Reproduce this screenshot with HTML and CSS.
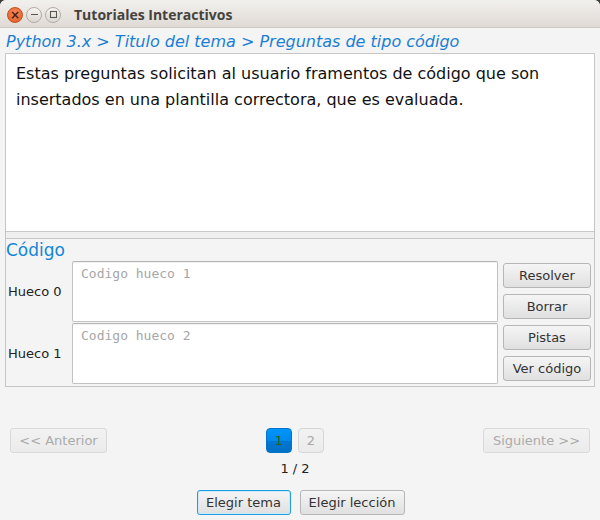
FILE: index.html
```html
<!DOCTYPE html>
<html>
<head>
<meta charset="utf-8">
<link rel="stylesheet" href="styles.css">
</head>
<body>
<div class="window">
  <div class="titlebar">
    <div class="wbtn close"><span>×</span></div>
    <div class="wbtn min"><svg width="9" height="9" viewBox="0 0 9 9"><path d="M1 4.5h7" stroke="#5a5650" stroke-width="1.2"/></svg></div>
    <div class="wbtn max"><svg width="9" height="9" viewBox="0 0 9 9"><rect x="1.5" y="1.5" width="6" height="6" fill="none" stroke="#5a5650" stroke-width="1.1"/></svg></div>
    <div class="wtitle">Tutoriales Interactivos</div>
  </div>
  <div class="content">
    <div class="crumb">Python 3.x &gt; Titulo del tema &gt; Preguntas de tipo código</div>
    <div class="split">
      <div class="desc">Estas preguntas solicitan al usuario framentos de código que son insertados en una plantilla correctora, que es evaluada.</div>
      <div class="divider"></div>
      <div class="code">
        <div class="code-title">Código</div>
        <div class="code-body">
          <div class="holes">
            <div class="hole">
              <div class="hole-label">Hueco 0</div>
              <div class="field">Codigo hueco 1</div>
            </div>
            <div class="hole">
              <div class="hole-label">Hueco 1</div>
              <div class="field">Codigo hueco 2</div>
            </div>
          </div>
          <div class="actions">
            <button class="btn side">Resolver</button>
            <button class="btn side">Borrar</button>
            <button class="btn side">Pistas</button>
            <button class="btn side">Ver código</button>
          </div>
        </div>
      </div>
    </div>
    <div class="pager">
      <button class="btn disabled nav">&lt;&lt; Anterior</button>
      <div class="pages">
        <button class="page current">1</button>
        <button class="page">2</button>
      </div>
      <button class="btn disabled nav">Siguiente &gt;&gt;</button>
    </div>
    <div class="count">1 / 2</div>
    <div class="bottom">
      <button class="btn focused">Elegir tema</button>
      <button class="btn">Elegir lección</button>
    </div>
  </div>
</div>
</body>
</html>
```
FILE: styles.css
```css
* { box-sizing: border-box; }
html, body { margin: 0; padding: 0; }
body {
  width: 600px;
  height: 520px;
  background: #3c3b37;
  overflow: hidden;
  font-family: "DejaVu Sans", sans-serif;
}
.window {
  width: 600px;
  height: 520px;
  background: #f4f4f4;
  border-radius: 6px 6px 0 0;
  overflow: hidden;
}
.titlebar {
  height: 28px;
  display: flex;
  align-items: center;
  padding-left: 7px;
  background: linear-gradient(#f2f0ed, #dfdad5);
  border-bottom: 1px solid #cfc9c3;
}
.wbtn {
  width: 16px;
  height: 16px;
  border-radius: 50%;
  display: flex;
  align-items: center;
  justify-content: center;
  margin-right: 3px;
  margin-top: 2px;
}
.close {
  background: radial-gradient(circle at 50% 35%, #f7875a, #e05a24);
  border: 1px solid #c4501e;
}
.close span {
  font-size: 12px;
  line-height: 12px;
  color: #4a2010;
  font-weight: bold;
}
.min, .max {
  background: linear-gradient(#f6f4f2, #dcd7d1);
  border: 1px solid #b2aca5;
}
.wtitle {
  margin-left: 10px;
  margin-top: 2px;
  font-family: "Open Sans", sans-serif;
  font-weight: bold;
  font-size: 14px;
  color: #45423e;
}
.content {
  padding: 0 5px;
}
.crumb {
  height: 25px;
  padding-top: 5px;
  padding-left: 1px;
  font-size: 16px;
  line-height: 18px;
  font-style: italic;
  color: #1a7fd4;
  white-space: nowrap;
}
.split {
  border: 1px solid #c6c6c6;
  height: 334px;
  display: flex;
  flex-direction: column;
}
.desc {
  height: 178px;
  background: #fff;
  border-bottom: 1px solid #c8c8c8;
  padding: 7px 10px;
  font-size: 16px;
  line-height: 26px;
  color: #111;
}
.divider {
  height: 7px;
  background: #efefef;
  border-bottom: 1px solid #c8c8c8;
}
.code {
  flex: 1;
  padding: 0 3px 0 0;
}
.code-title {
  height: 22px;
  font-size: 17px;
  line-height: 22px;
  color: #1287d6;
}
.code-body {
  display: flex;
  gap: 5px;
}
.holes {
  flex: 1;
  display: flex;
  flex-direction: column;
  gap: 1px;
}
.hole {
  display: flex;
  align-items: center;
  height: 61px;
}
.hole-label {
  width: 66px;
  padding-left: 2px;
  font-size: 13px;
  color: #222;
}
.field {
  flex: 1;
  height: 61px;
  background: #fff;
  border: 1px solid #c2c2c2;
  border-top-color: #b4b4b4;
  border-radius: 2px;
  padding: 4px 8px;
  font-family: "DejaVu Sans Mono", monospace;
  font-size: 13px;
  line-height: 16px;
  color: #a6a6a6;
  box-shadow: inset 0 1px 1px rgba(0,0,0,0.06);
}
.actions {
  width: 88px;
  display: flex;
  flex-direction: column;
  gap: 6px;
  padding-top: 2px;
}
.btn {
  height: 25px;
  font-family: "DejaVu Sans", sans-serif;
  font-size: 13px;
  color: #333;
  background: linear-gradient(#f5f5f5, #e0e0e0);
  border: 1px solid #b6b6b6;
  border-radius: 3px;
  padding: 0 8px;
  white-space: nowrap;
}
.side {
  width: 88px;
  padding: 0;
}
.pager {
  margin-top: 41px;
  display: flex;
  justify-content: space-between;
  align-items: center;
  padding: 0 5px 0 5px;
}
.nav {
  width: 97px;
}
.nav:last-child {
  width: 107px;
}
.disabled {
  color: #ababab;
  background: linear-gradient(#f2f2f2, #ebebeb);
  border-color: #d9d9d9;
}
.pages {
  display: flex;
  gap: 6px;
}
.page {
  width: 26px;
  height: 25px;
  border-radius: 4px;
  font-family: "DejaVu Sans", sans-serif;
  font-size: 13px;
  padding: 0;
  color: #a8a8a8;
  background: linear-gradient(#f2f2f2, #ebebeb);
  border: 1px solid #d6d6d6;
}
.page.current {
  color: #2f5f10;
  background: linear-gradient(#0095fa 0%, #0088ec 50%, #0078d4 52%, #006fc4 100%);
  border: 1px solid #0075cc;
}
.count {
  text-align: center;
  font-size: 13px;
  line-height: 16px;
  margin-top: 8px;
  color: #222;
  padding-right: 10px;
}
.bottom {
  display: flex;
  justify-content: center;
  gap: 9px;
  margin-top: 13px;
  padding-left: 1px;
}
.bottom .btn:first-child { width: 94px; }
.bottom .btn:last-child { width: 105px; }
.focused {
  border: 1px solid #1c9ee0;
  box-shadow: inset 0 0 0 1px #cde9f7;
}
```
